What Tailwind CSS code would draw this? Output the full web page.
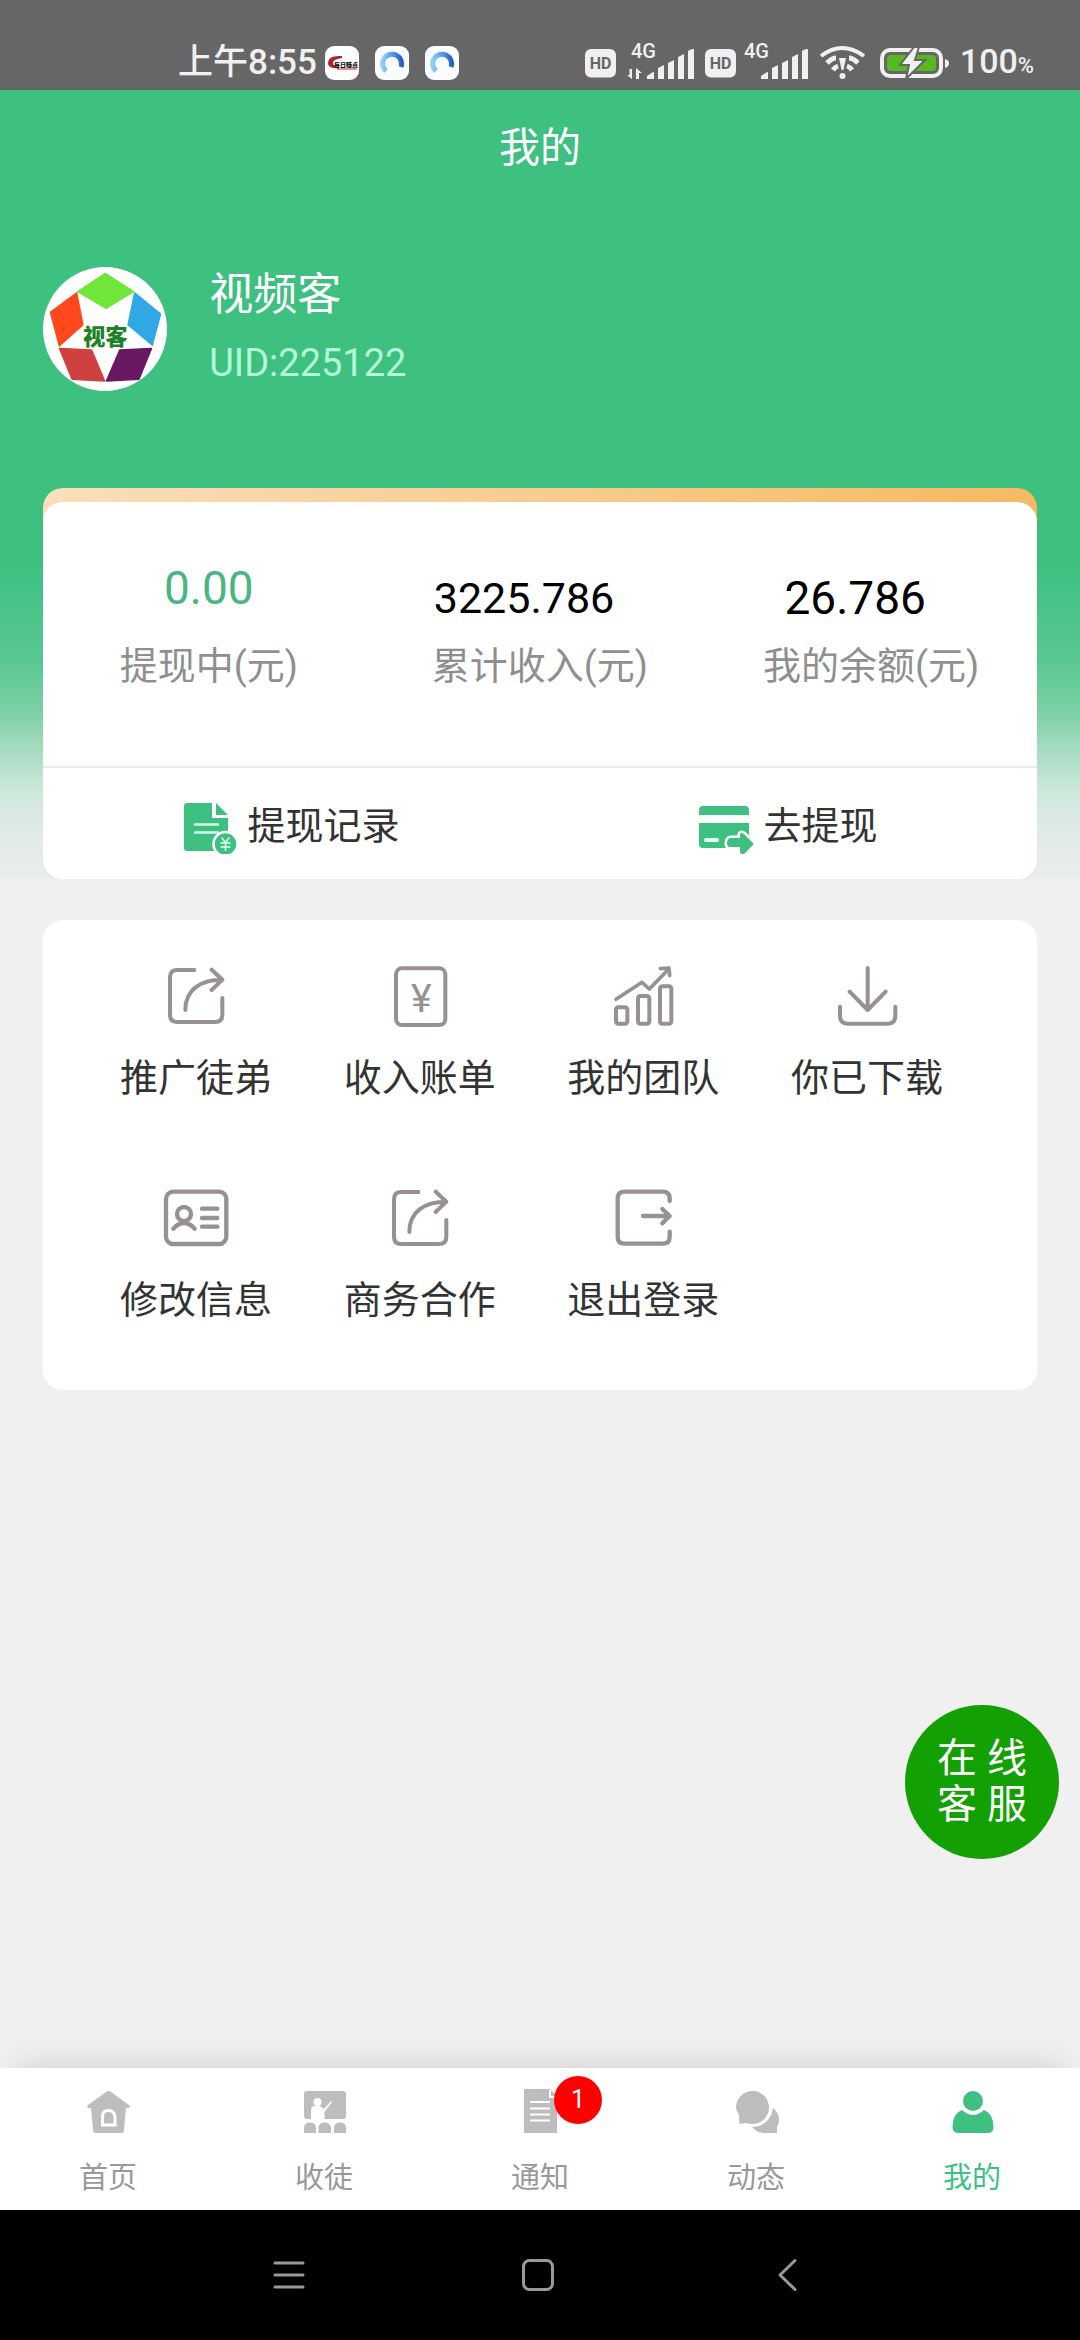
<!DOCTYPE html>
<html lang="zh-CN">
<head>
<meta charset="utf-8">
<meta name="viewport" content="width=device-width, initial-scale=1">
<title>我的</title>
<script src="https://cdn.jsdelivr.net/npm/@tailwindcss/browser@4"></script>
</head>
<body class="flex min-h-screen flex-col bg-[#f0f0f0] font-[Roboto,'Noto_Sans_CJK_SC',sans-serif] text-[#333]">

<!-- Shared gradient and icon shapes -->
<svg class="absolute size-0" aria-hidden="true">
  <defs><linearGradient id="ring" x1="0" y1="0" x2="1" y2="0"><stop offset="0" stop-color="#8fd0f8"/><stop offset="0.6" stop-color="#4a8ee6"/><stop offset="1" stop-color="#2a5fc4"/></linearGradient></defs>
</svg>
<svg class="hidden" aria-hidden="true">
  <symbol id="share" viewBox="210 60 216 216"><path d="M313 90H262Q240 90 240 112V224Q240 246 262 246H375Q397 246 397 224V174M286 210C286 150 330 119 397 119M365 89L397 119L365 150" fill="none" stroke="#979191" stroke-width="12" stroke-linecap="round" stroke-linejoin="round"/></symbol>
  <symbol id="hd" viewBox="0 0 32 29"><rect x="0" y="0" width="31" height="28.500" rx="6" fill="#f0f0f0"/><text x="15.500" y="20" text-anchor="middle" font-family="Roboto" font-weight="700" font-size="16" fill="#666">HD</text></symbol>
  <symbol id="bars" viewBox="0 0 48 31"><path d="M0 31V28L7 23.500V31ZM11 31V20L17 17V31ZM21 31V15L27 12V31ZM31 31V9L37 6V31ZM41 31V3Q43 1 47 1V31Z" fill="#f0f0f0"/></symbol>
  <symbol id="browser" viewBox="0 0 34 34"><rect width="34" height="34" rx="9" fill="#fbfcff"/><path d="M11 25A9.500 9.500 0 1 1 26 21" fill="none" stroke="url(#ring)" stroke-width="5"/></symbol>
</svg>

<!-- Status bar -->
<header class="flex h-[90px] items-center justify-between bg-[#666] pt-9 pr-[46px] pl-[178px] text-[#f0f0f0]">
  <div class="flex items-center gap-4">
    <div class="-mr-2 text-[35px] leading-10 font-medium">上午8:55</div>
    <svg class="size-[34px]" viewBox="0 0 34 34"><rect width="34" height="34" rx="9" fill="#fff"/><path d="M17 10Q3 9 3 17Q3 23 13 22Q7 19 8 16Q9 13 17 12Z" fill="#b91c2c"/><path d="M12 23H32" stroke="#c33" stroke-width="1"/><text x="9" y="21" font-family="Noto Sans CJK SC" font-weight="900" font-size="6" fill="#111">每日赚点</text></svg>
    <svg class="size-[34px]"><use href="#browser"/></svg>
    <svg class="size-[34px]"><use href="#browser"/></svg>
  </div>
  <div class="flex items-center gap-[10px]">
    <svg class="h-[29px] w-8"><use href="#hd"/></svg>
    <svg class="h-12 w-[68px]" viewBox="0 0 68 48"><text x="4" y="19" font-family="Roboto" font-weight="500" font-size="20" fill="#f0f0f0">4G</text><use href="#bars" x="20" y="9" width="48" height="31"/><path d="M0 36H2.500V30H5V40ZM9 40V29L15 34H12V40Z" fill="#f0f0f0"/></svg>
    <svg class="h-[29px] w-8"><use href="#hd"/></svg>
    <svg class="-ml-1 h-12 w-[66px]" viewBox="0 0 66 48"><text x="1" y="19" font-family="Roboto" font-weight="500" font-size="20" fill="#f0f0f0">4G</text><use href="#bars" x="18" y="9" width="48" height="31"/></svg>
    <svg class="h-[36px] w-[47px]" viewBox="0 0 47 36" fill="none" stroke="#f0f0f0"><path d="M2 11Q23 -5 45 11" stroke-width="4"/><path d="M8 18Q13 13 17 13M39 18Q34 13 30 13" stroke-width="5"/><path d="M14 25Q16 22 19 21M33 25Q31 22 28 21" stroke-width="5"/><path d="M20 13L22.500 25H24.500L27 13Z" fill="#f0f0f0" stroke="none"/><circle cx="23.500" cy="31" r="3" fill="#f0f0f0" stroke="none"/></svg>
    <svg class="ml-1 h-[34px] w-[70px]" viewBox="0 0 70 34"><rect x="2" y="4" width="59" height="26" rx="8" fill="none" stroke="#f0f0f0" stroke-width="4"/><rect x="7" y="9" width="49" height="16" rx="4" fill="#57b81f"/><path d="M65 13Q69 14 69 17Q69 21 65 22Z" fill="#f0f0f0"/><path d="M34 1L20 19H29L26 33L45 14H35L39 1Z" fill="#f0f0f0" stroke="#666" stroke-width="2"/></svg>
    <div class="flex items-baseline leading-10 font-medium"><span class="text-[34px]">100</span><span class="text-[22px]">%</span></div>
  </div>
</header>

<main class="flex flex-1 flex-col">
  <section class="bg-[linear-gradient(to_bottom,#3ec081_0%,#3ec081_60%,#57c791_72%,#7dd0a5_79%,#aaddc4_84%,#cfe8dc_89%,#e1ebe6_94%,#e9eded_100%)] px-[4%]">
    <h1 class="pt-[30px] pb-[30px] text-center text-[41px] leading-[56px] text-white">我的</h1>

    <!-- Profile -->
    <div class="flex items-center gap-[42px] pt-[61px] pb-[97px]">
      <svg class="size-[124px]" viewBox="129 81 372 372" role="img" aria-label="视客">
        <circle cx="315" cy="267" r="186" fill="#fff"/>
        <g stroke-linejoin="round" stroke-width="4">
          <path d="M316 100L401 155L318 205L233 155Z" fill="#70e638" stroke="#70e638"/>
          <path d="M230 158L249 254L178 318L151 217Z" fill="#ff481c" stroke="#ff481c"/>
          <path d="M404 158L482 222L457 316L384 254Z" fill="#30a8e4" stroke="#30a8e4"/>
          <path d="M178 325L275 330L314 423L216 418Z" fill="#cf4040" stroke="#cf4040"/>
          <path d="M455 325L359 330L319 423L417 418Z" fill="#681860" stroke="#681860"/>
        </g>
        <text x="249" y="316" font-family="Noto Sans CJK SC" font-weight="900" font-size="67" fill="#1c8227">视客</text>
      </svg>
      <div class="flex flex-col gap-4 pb-1">
        <div class="text-[44px] leading-[56px] text-white">视频客</div>
        <div class="text-[38px] leading-[48px] text-[#b4fbd7]">UID:225122</div>
      </div>
    </div>

    <!-- Balance card -->
    <div class="rounded-[20px] bg-[linear-gradient(to_right,#f9dfbc,#f5b961)] bg-[length:100%_60px] bg-no-repeat pt-[14px]">
      <div class="rounded-[20px] bg-white">
        <dl class="grid grid-cols-3 pt-14 pb-[72px] text-center">
          <div class="flex flex-col-reverse gap-[10px]">
            <dt class="text-[38px] leading-[56px] text-[#8f8f8f]">提现中(元)</dt>
            <dd class="h-[70px] text-[46px] leading-[60px] text-[#4ab582]">0.00</dd>
          </div>
          <div class="flex flex-col-reverse gap-[10px]">
            <dt class="text-[38px] leading-[56px] text-[#8f8f8f]">累计收入(元)</dt>
            <dd class="h-[70px] pt-[10px] pr-8 text-[43px] leading-[60px] text-black">3225.786</dd>
          </div>
          <div class="flex flex-col-reverse gap-[10px]">
            <dt class="text-[38px] leading-[56px] text-[#8f8f8f]">我的余额(元)</dt>
            <dd class="h-[70px] pt-[10px] pr-8 text-[46px] leading-[60px] text-black">26.786</dd>
          </div>
        </dl>
        <div class="grid grid-cols-2 border-t-2 border-[#ebebeb] text-[38px] leading-[56px]">
          <a href="#records" class="flex items-center justify-center gap-2 pt-[30px] pb-[25px]">
            <svg class="size-14" viewBox="0 0 56 56"><path d="M3 5H28V20H44V51Q44 53 42 53H3Q0 53 0 50V8Q0 5 3 5ZM32 5L44 17H32Z" fill="#3ec081"/><path d="M11 26.500H34M11 34.500H34" stroke="#d3fbe7" stroke-width="2.500" stroke-linecap="round"/><circle cx="41.500" cy="46" r="12" fill="#3ec081" stroke="#fff" stroke-width="2.500"/><path d="M37.500 39.500L41.500 44.500L45.500 39.500M41.500 44.500V53M36.500 45H46.500M36.500 49H46.500" fill="none" stroke="#e4fff2" stroke-width="1.500"/></svg>
            提现记录</a>
          <a href="#withdraw" class="flex items-center justify-center gap-2 pt-[30px] pb-[25px]">
            <svg class="size-14" viewBox="0 0 56 56"><path d="M0 17V12Q0 8 4 8H46Q50 8 50 12V17ZM0 25H50V50H4Q0 50 0 46Z" fill="#3ec081"/><path d="M7 42H18" stroke="#e4fff2" stroke-width="4" stroke-linecap="round"/><path d="M31 40H41V36Q42 34 45 36L54 45Q55 46 54 47L45 56H43Q41 56 41 54V49H31Q28 49 28 45T31 40Z" fill="#3ec081" stroke="#fff" stroke-width="5" paint-order="stroke"/></svg>
            去提现</a>
        </div>
      </div>
    </div>
  </section>

  <!-- Feature menu -->
  <nav class="mx-[4%] mt-[41px] grid grid-cols-4 gap-y-[76px] rounded-[20px] bg-white pt-10 pr-[58px] pb-[62px] pl-[41px] text-[38px] leading-[56px]">
    <a href="#promote" class="flex flex-col items-center gap-[18px]"><svg class="size-[72px]"><use href="#share"/></svg>推广徒弟</a>
    <a href="#bill" class="flex flex-col items-center gap-[18px]"><svg class="size-[72px]" viewBox="880 60 216 216"><rect x="916" y="85" width="148" height="170" rx="18" fill="none" stroke="#979191" stroke-width="12"/><text x="992" y="215" text-anchor="middle" font-family="Roboto" font-weight="400" font-size="118" fill="#979191">¥</text></svg>收入账单</a>
    <a href="#team" class="flex flex-col items-center gap-[18px]"><svg class="size-[72px]" viewBox="232 60 216 216" fill="none" stroke="#979191" stroke-width="12" stroke-linecap="round" stroke-linejoin="round"><rect x="259" y="202" width="34" height="49" rx="7"/><rect x="325" y="168" width="34" height="83" rx="7"/><rect x="391" y="139" width="34" height="112" rx="7"/><path d="M259 178L337 127L359 147L418 86M392 86L418 84L420 106" stroke-width="11"/></svg>我的团队</a>
    <a href="#download" class="flex flex-col items-center gap-[18px]"><svg class="size-[72px]" viewBox="904 60 216 216" fill="none" stroke="#979191" stroke-width="12" stroke-linecap="round" stroke-linejoin="round"><path d="M1014 84V210M960 155L1014 210L1068 155M931 200V228Q931 251 954 251H1075Q1097 251 1097 228V200"/></svg>你已下载</a>
    <a href="#profile" class="flex flex-col items-center gap-[18px]"><svg class="size-[72px]" viewBox="210 726 216 216" fill="none" stroke="#979191" stroke-width="13" stroke-linecap="round"><rect x="228" y="755" width="181" height="157" rx="22"/><circle cx="282" cy="822" r="21"/><path d="M250 866Q282 832 314 866M336 806H382M336 834H382M336 860H382"/></svg>修改信息</a>
    <a href="#business" class="flex flex-col items-center gap-[18px]"><svg class="size-[72px]"><use href="#share"/></svg>商务合作</a>
    <a href="#logout" class="flex flex-col items-center gap-[18px]"><svg class="size-[72px]" viewBox="232 726 216 216" fill="none" stroke="#979191" stroke-width="13" stroke-linecap="round" stroke-linejoin="round"><path d="M420 783V776Q420 755 399 755H285Q264 755 264 776V890Q264 911 285 911H399Q420 911 420 890V875M340 828H418M398 807L420 828L398 850"/></svg>退出登录</a>
  </nav>
</main>

<!-- Customer service floating button -->
<button type="button" class="fixed right-[21px] bottom-[481px] flex size-[154px] flex-col items-center justify-center rounded-full bg-[#12a002] text-[40px] leading-[46px] text-white"><span>在 线</span><span>客 服</span></button>

<!-- Tab bar -->
<nav class="grid grid-cols-5 bg-white pt-5 pb-3 text-[29px] leading-10 text-[#999] shadow-[0_-16px_32px_-16px_rgba(0,0,0,0.15)]">
  <a href="#home" class="flex flex-col items-center gap-[22px]"><svg class="size-12" viewBox="0 0 48 48"><path d="M22 4Q24.500 2 27 4L45 17Q47 20 44 20H42L40 42Q40 45 37 45H12Q9 45 9 42L7 20H5Q2 20 4 17Z" fill="#bdbdbd"/><path d="M18.500 37V29Q18.500 22.500 24.500 22.500T31 29V37Z" fill="#bdbdbd" stroke="#fff" stroke-width="3"/></svg>首页</a>
  <a href="#apprentice" class="flex flex-col items-center gap-[22px]"><svg class="size-12" viewBox="0 0 48 48"><rect x="4" y="3" width="42" height="28" rx="3" fill="#bdbdbd"/><circle cx="17.500" cy="14" r="4" fill="#fff"/><path d="M11 31V22Q11 18 15 18H20L24 21L31 13L32 14L24.500 24V31Z" fill="#fff"/><path d="M4 45V40Q4 34.500 10 34.500T16 40V45ZM18.500 45V40Q18.500 34.500 24.500 34.500T31 40V45ZM34 45V40Q34 34.500 40 34.500T46 40V45Z" fill="#bdbdbd"/></svg>收徒</a>
  <a href="#notice" class="relative flex flex-col items-center gap-[22px]"><svg class="size-12" viewBox="0 0 48 48"><path d="M8 1H34L41 8V45H8Z" fill="#bdbdbd"/><path d="M34 2V9H41M14 14H34M14 20.500H34M14 26.500H34M14 32.500H34" fill="none" stroke="#fff" stroke-width="2"/></svg>通知<span class="absolute -top-3 left-1/2 ml-[14px] flex size-12 items-center justify-center rounded-full bg-[#f00] text-[25px] text-white">1</span></a>
  <a href="#moments" class="flex flex-col items-center gap-[22px]"><svg class="size-12" viewBox="0 0 48 48" fill="#bdbdbd"><path d="M41 20Q47 25 47 32Q47 36 45 39L45 45Q35 45 35 45Q26 46 20 39Q38 38 41 20Z"/><path d="M20.500 3A16.500 16.500 0 1 1 20.500 36Q17 36 14 35L7.500 36L7 27Q4 23 4 19A16.500 16.500 0 0 1 20.500 3Z"/></svg>动态</a>
  <a href="#me" aria-current="page" class="flex flex-col items-center gap-[22px] text-[#3ec081]"><svg class="size-12" viewBox="0 0 48 48" fill="#3ec081"><circle cx="25" cy="13" r="10"/><path d="M14 22Q25 32 36 22Q45 25 45.500 39Q45.500 45 39 45H11Q4.500 45 4.500 39Q5 25 14 22Z"/></svg>我的</a>
</nav>

<!-- System navigation -->
<nav class="grid h-[130px] grid-cols-3 items-center bg-black pr-[168px] pl-[164px]">
  <button type="button" aria-label="最近任务" class="flex justify-center"><svg class="size-9" viewBox="0 0 36 36"><path d="M4 6H32M4 18H32M4 30H32" stroke="#999" stroke-width="3" stroke-linecap="round"/></svg></button>
  <button type="button" aria-label="主屏幕" class="flex justify-center"><svg class="size-9" viewBox="0 0 36 36"><rect x="3.500" y="3.500" width="29" height="29" rx="6" fill="none" stroke="#999" stroke-width="3"/></svg></button>
  <button type="button" aria-label="返回" class="flex justify-center"><svg class="size-9" viewBox="0 0 36 36"><path d="M26 3.500L11 18L26 32.500" fill="none" stroke="#999" stroke-width="3" stroke-linecap="round" stroke-linejoin="round"/></svg></button>
</nav>
</body>
</html>
